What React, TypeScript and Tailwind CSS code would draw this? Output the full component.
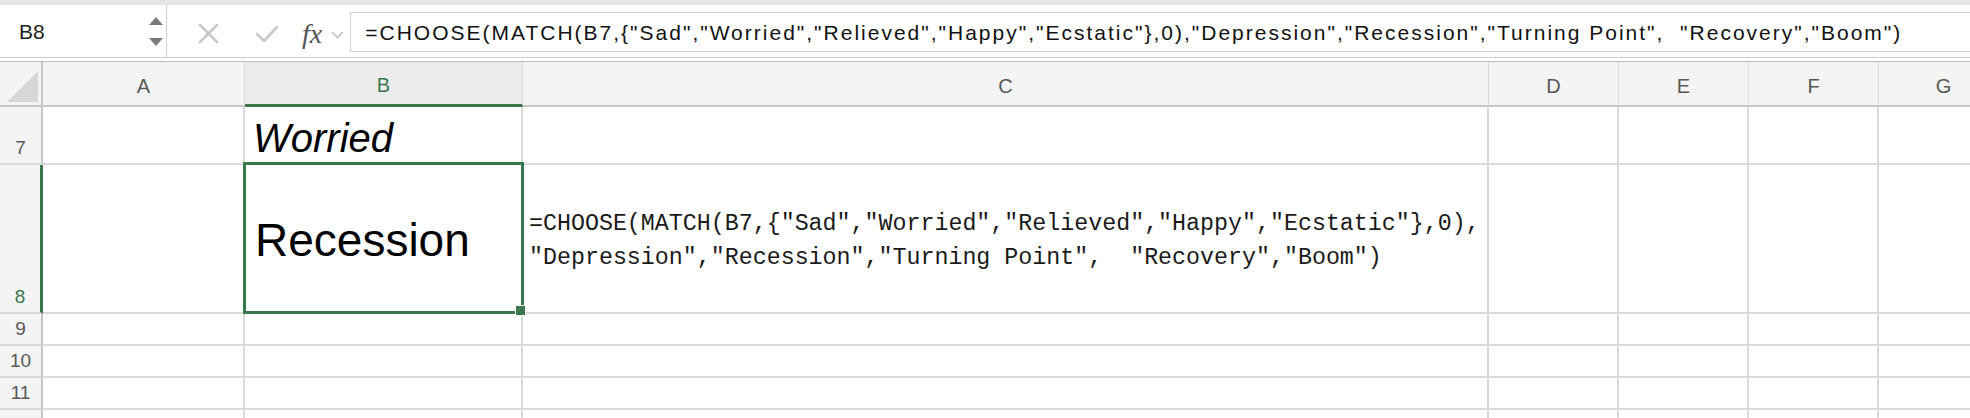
import React from "react";

const COLUMNS = ["A", "B", "C", "D", "E", "F", "G"];
const ROWS = [7, 8, 9, 10, 11, 12];

const formula =
  '=CHOOSE(MATCH(B7,{"Sad","Worried","Relieved","Happy","Ecstatic"},0),"Depression","Recession","Turning Point",  "Recovery","Boom")';

function NameBox() {
  return (
    <div className="flex w-[167px] shrink-0 items-center justify-between border-r border-[#d0d0d0] pl-[19px] pr-[3px]">
      <span className="text-[21px] leading-none text-[#1f1f1f]">B8</span>
      <svg width="14" height="30" viewBox="0 0 14 30" className="mt-[2px]">
        <polygon points="7,0 14,8 0,8" fill="#7a7a7a" />
        <polygon points="0,21 14,21 7,29" fill="#7a7a7a" />
      </svg>
    </div>
  );
}

function FormulaBar() {
  return (
    <div className="flex h-[53px] border-b border-[#cfcfcf] bg-white">
      <NameBox />

      {/* cancel / enter / fx */}
      <div className="flex items-center pt-[5px]">
        <svg width="23" height="20" viewBox="0 0 23 20" className="ml-[30px]">
          <path d="M3 1 L20 18 M20 1 L3 18" stroke="#c9c9c9" strokeWidth="2.6" strokeLinecap="round" />
        </svg>
        <svg width="24" height="18" viewBox="0 0 24 18" className="ml-[35px]">
          <polyline points="2,9 9,16 22,2" fill="none" stroke="#c9c9c9" strokeWidth="2.6" strokeLinecap="round" strokeLinejoin="round" />
        </svg>
        <span className="ml-[23px] font-['Liberation_Serif',serif] text-[28px] italic leading-none text-[#555]">
          fx
        </span>
        <svg width="13" height="8" viewBox="0 0 13 8" className="ml-[9px] mt-[2px]">
          <polyline points="1,1 6.5,6.5 12,1" fill="none" stroke="#c2c2c2" strokeWidth="1.6" />
        </svg>
      </div>

      <div className="mb-[5px] ml-[6px] flex h-[40px] min-w-0 flex-1 items-center self-end overflow-hidden whitespace-pre border-y border-l border-[#d3d3d3] pl-[14px] text-[21px] leading-none tracking-[2px] text-[#111]">
        {formula}
      </div>
    </div>
  );
}

function CornerCell() {
  return (
    <div className="relative border-b-2 border-r-2 border-[#c6c6c6] bg-[#f4f4f4]">
      <svg width="31" height="31" viewBox="0 0 31 31" className="absolute bottom-[3px] right-[3px]">
        <polygon points="31,0 31,31 0,31" fill="#d7d7d7" />
      </svg>
    </div>
  );
}

function ColumnHeader({ label }: { label: string }) {
  const selected = label === "B";
  return (
    <div
      className={
        selected
          ? "flex items-center justify-center border-b-[3px] border-r border-b-[#3b774c] border-r-[#dcdcdc] bg-[#ececec] pt-[4px] text-[20px] leading-none text-[#3b774c]"
          : "flex items-center justify-center border-b-2 border-r border-b-[#c6c6c6] border-r-[#dcdcdc] bg-[#f4f4f4] pt-[4px] text-[20px] leading-none text-[#585858]"
      }
    >
      {label}
    </div>
  );
}

function RowHeader({ row }: { row: number }) {
  const selected = row === 8;
  // row 12 sits under the window edge, its number is out of view
  const visible = row < 12;
  return (
    <div
      className={
        selected
          ? "flex items-end justify-center border-b-2 border-r-[3px] border-b-[#dadada] border-r-[#3b774c] bg-[#f4f4f4] pb-[6px] text-[19px] leading-none text-[#3b774c]"
          : "flex items-end justify-center border-b-2 border-r-2 border-b-[#dadada] border-r-[#c6c6c6] bg-[#f4f4f4] pb-[6px] text-[19px] leading-none text-[#585858]"
      }
    >
      {visible ? row : null}
    </div>
  );
}

function Cell({ row, col }: { row: number; col: string }) {
  const base = "relative border-b-2 border-r-2 border-[#dadada] bg-white";

  if (row === 7 && col === "B") {
    return (
      <div className={`${base} flex items-end pb-[5px] pl-[8px]`}>
        <span className="text-[40px] italic leading-none text-black">Worried</span>
      </div>
    );
  }

  if (row === 8 && col === "B") {
    return (
      <div className={`${base} flex items-center pl-[10px] pt-[2px]`}>
        <span className="text-[46px] leading-none text-black">Recession</span>
        {/* active cell outline + fill handle */}
        <div className="absolute -bottom-[2px] -left-[2px] -right-[3px] -top-[3px] z-10 border-[3px] border-[#3b774c]" />
        <div className="absolute -bottom-[4px] -right-[5px] z-20 h-[11px] w-[11px] border border-white bg-[#3b774c]" />
      </div>
    );
  }

  if (row === 8 && col === "C") {
    return (
      <div className={`${base} flex flex-col justify-center pl-[6px] pt-[4px] font-['Liberation_Mono',monospace] text-[23.3px] leading-[34px] whitespace-pre text-[#1a1a1a]`}>
        <span>{'=CHOOSE(MATCH(B7,{"Sad","Worried","Relieved","Happy","Ecstatic"},0),'}</span>
        <span>{'"Depression","Recession","Turning Point",  "Recovery","Boom")'}</span>
      </div>
    );
  }

  return <div className={base} />;
}

export default function App() {
  return (
    <div className="h-[418px] w-[1970px] overflow-hidden bg-white font-['Liberation_Sans',Arial,sans-serif]">
      <div className="h-[5px] bg-[#e6e6e6]" />
      <FormulaBar />
      <div className="h-[4px] border-b border-[#bdbdbd] bg-white" />

      {/* sheet grid */}
      <div className="grid grid-cols-[43px_202px_278px_966px_130px_130px_130px_130px] grid-rows-[45px_58px_149px_32px_32px_32px_32px_32px]">
        <CornerCell />
        {COLUMNS.map((c) => (
          <ColumnHeader key={c} label={c} />
        ))}

        {ROWS.map((r) => (
          <React.Fragment key={r}>
            <RowHeader row={r} />
            {COLUMNS.map((c) => (
              <Cell key={c} row={r} col={c} />
            ))}
          </React.Fragment>
        ))}
      </div>
    </div>
  );
}
